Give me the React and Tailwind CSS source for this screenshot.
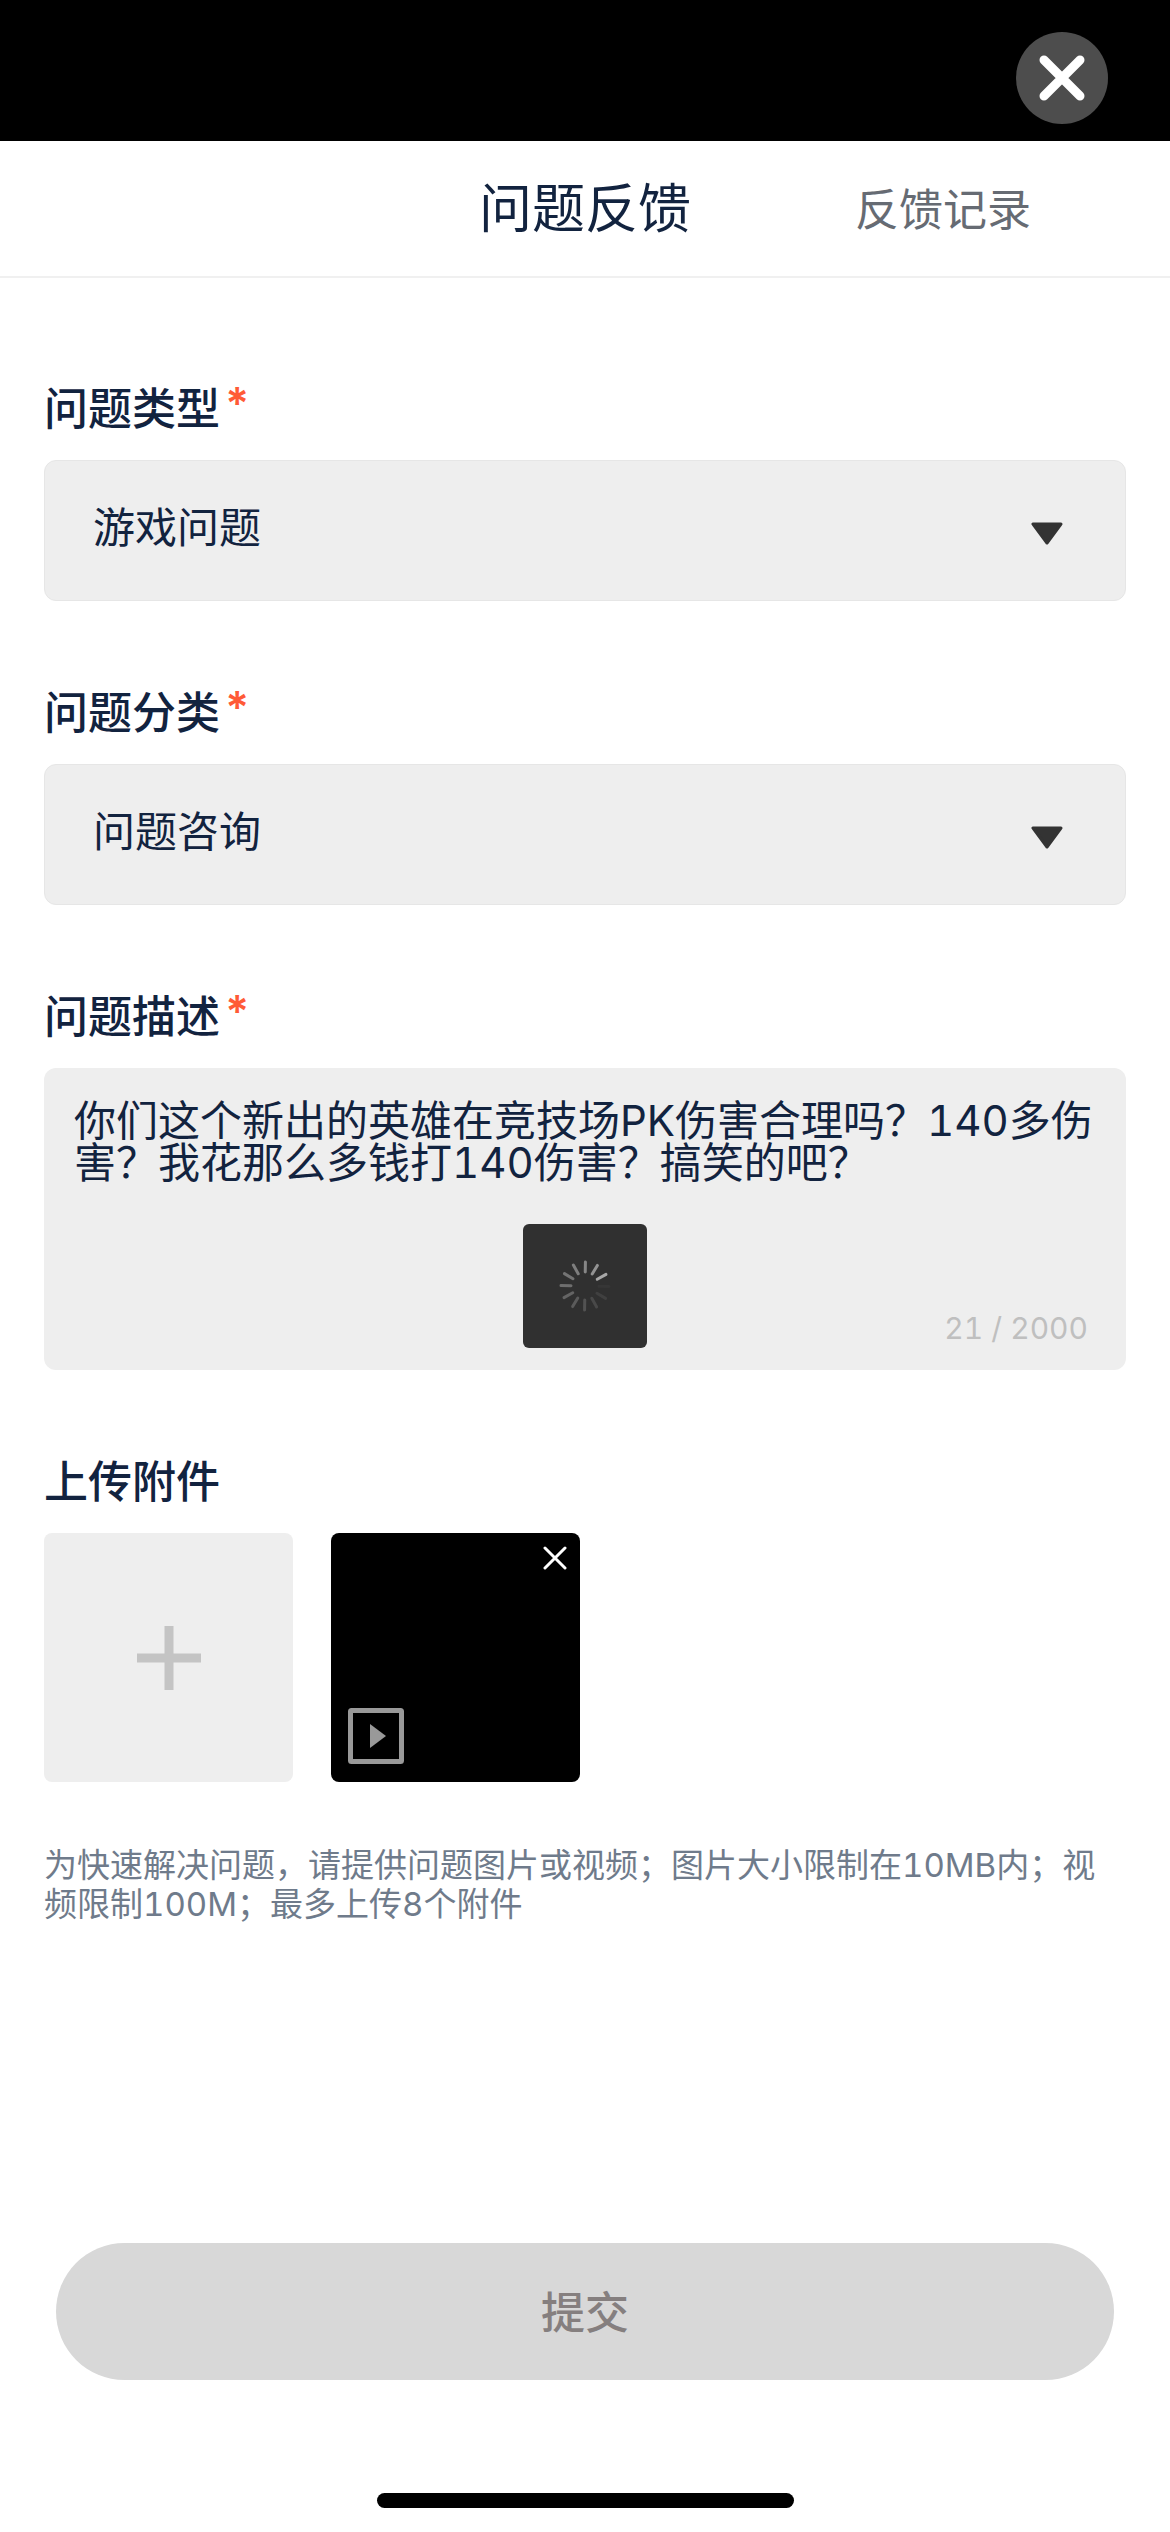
import React, { useState } from "react";

const MAX_LENGTH = 2000;

const typeOptions = ["游戏问题", "充值问题", "账号问题"];
const categoryOptions = ["问题咨询", "问题反馈", "意见建议"];

// twelve spokes, clockwise from the top
const spokes = [0.42, 0.48, 0.58, 0.03, 0.08, 0.12, 0.17, 0.21, 0.25, 0.3, 0.33, 0.38];

const Spinner = () => (
    <svg viewBox="-30 -30 60 60" className="w-[60px] h-[60px]">
        {spokes.map((opacity, i) => (
            <line
                key={i}
                x1="0"
                y1="-24"
                x2="0"
                y2="-14"
                stroke="#fff"
                strokeWidth="3"
                strokeLinecap="round"
                strokeOpacity={opacity}
                transform={`rotate(${i * 30 + 1})`}
            />
        ))}
    </svg>
);

const FieldLabel = ({ htmlFor, children }) => (
    <label
        htmlFor={htmlFor}
        className="flex items-start mb-[23px] pt-[2px] text-[44px] leading-[56px] font-medium"
    >
        {children}
        <span className="ml-[3px] leading-[44px] font-semibold text-[#ff5a36]">*</span>
    </label>
);

const SelectField = ({ id, label, options, value, onChange }) => (
    <div className="mb-[82px]">
        <FieldLabel htmlFor={id}>{label}</FieldLabel>
        <div className="relative">
            <select
                id={id}
                value={value}
                onChange={(e) => onChange(e.target.value)}
                className="block w-full h-[141px] pl-[48px] pr-[120px] pb-[6px] appearance-none rounded-xl border border-[#e6e6e6] bg-[#eeeeee] text-[42px] outline-none"
            >
                {options.map((option) => (
                    <option key={option}>{option}</option>
                ))}
            </select>
            <div className="absolute inset-y-0 right-[63px] flex items-center pt-[5px] pointer-events-none">
                <svg viewBox="0 0 32 23" className="w-[32px] h-[23px]">
                    <path
                        d="M2 2H30L16 21Z"
                        fill="#333"
                        stroke="#333"
                        strokeWidth="3"
                        strokeLinejoin="round"
                    />
                </svg>
            </div>
        </div>
    </div>
);

const App = () => {
    const [type, setType] = useState("游戏问题");
    const [category, setCategory] = useState("问题咨询");
    const [description, setDescription] = useState(
        "你们这个新出的英雄在竞技场PK伤害合理吗？140多伤害？我花那么多钱打140伤害？搞笑的吧？"
    );

    return (
        <div className="min-h-screen flex flex-col bg-white text-[#12233f] tabular-nums font-['Inter','Noto_Sans_CJK_SC',sans-serif]">
            <div className="h-[141px] flex justify-end items-center pt-[15px] pr-[62px] bg-black">
                <button
                    type="button"
                    aria-label="关闭"
                    className="w-[92px] h-[92px] flex items-center justify-center rounded-full bg-[#4d4d4d]"
                >
                    <svg viewBox="0 0 48 48" className="w-[48px] h-[48px]">
                        <path
                            d="M6 6L42 42M42 6L6 42"
                            stroke="#fff"
                            strokeWidth="9"
                            strokeLinecap="round"
                        />
                    </svg>
                </button>
            </div>

            <header className="h-[137px] grid grid-cols-[1fr_auto_1fr] items-center border-b-2 border-[#f0f0f0]">
                <h1 className="col-start-2 text-[53px] leading-[64px]">问题反馈</h1>
                <a
                    href="#records"
                    className="justify-self-end mr-[139px] pt-[2px] text-[44px] leading-[56px] text-[#666b73]"
                >
                    反馈记录
                </a>
            </header>

            <form
                className="flex-1 flex flex-col"
                onSubmit={(e) => e.preventDefault()}
            >
                <div className="flex-1 px-[44px] pt-[101px]">
                    <SelectField
                        id="type"
                        label="问题类型"
                        options={typeOptions}
                        value={type}
                        onChange={setType}
                    />
                    <SelectField
                        id="category"
                        label="问题分类"
                        options={categoryOptions}
                        value={category}
                        onChange={setCategory}
                    />

                    <div className="mb-[82px]">
                        <FieldLabel htmlFor="description">问题描述</FieldLabel>
                        <div className="relative flex flex-col px-[30px] pt-[32px] pb-[22px] rounded-xl bg-[#eeeeee]">
                            <textarea
                                id="description"
                                maxLength={MAX_LENGTH}
                                value={description}
                                onChange={(e) => setDescription(e.target.value)}
                                className="w-full h-[208px] resize-none bg-transparent text-[42px] leading-[42px] outline-none"
                            />
                            <span className="self-end mr-[8px] text-[30px] leading-[40px] text-[#bfbfbf]">
                                21 / {MAX_LENGTH}
                            </span>
                            <div className="absolute inset-x-0 bottom-[22px] flex justify-center pointer-events-none">
                                <div className="w-[124px] h-[124px] flex items-center justify-center rounded-md bg-[#303030]">
                                    <Spinner />
                                </div>
                            </div>
                        </div>
                    </div>

                    <h2 className="mb-[23px] pt-[2px] text-[44px] leading-[56px] font-medium">
                        上传附件
                    </h2>
                    <div className="flex gap-[38px]">
                        <button
                            type="button"
                            aria-label="添加附件"
                            className="w-[249px] h-[249px] flex items-center justify-center rounded-lg bg-[#eeeeee]"
                        >
                            <svg viewBox="0 0 64 64" className="w-[64px] h-[64px]">
                                <path d="M32 0V64M0 32H64" stroke="#c4c4c4" strokeWidth="9" />
                            </svg>
                        </button>
                        <div className="w-[249px] h-[249px] flex flex-col justify-between rounded-lg bg-black pt-[13px] pr-[13px] pb-[18px] pl-[17px]">
                            <button type="button" aria-label="删除附件" className="self-end">
                                <svg viewBox="0 0 24 24" className="w-[24px] h-[24px]">
                                    <path
                                        d="M2 2L22 22M22 2L2 22"
                                        stroke="#fff"
                                        strokeWidth="3"
                                        strokeLinecap="round"
                                    />
                                </svg>
                            </button>
                            <svg viewBox="0 0 56 56" className="w-[56px] h-[56px]">
                                <rect
                                    x="2.5"
                                    y="2.5"
                                    width="51"
                                    height="51"
                                    rx="1"
                                    fill="none"
                                    stroke="#999"
                                    strokeWidth="5"
                                />
                                <path d="M22 16L38 28L22 40Z" fill="#999" />
                            </svg>
                        </div>
                    </div>

                    <p className="mt-16 pr-4 text-[33px] leading-[39px] text-[#6f7b8b]">
                        为快速解决问题，请提供问题图片或视频；图片大小限制在10MB内；视频限制100M；最多上传8个附件
                    </p>
                </div>

                <div className="px-[56px] pb-[113px]">
                    <button
                        type="submit"
                        disabled
                        className="w-full h-[137px] pt-[2px] rounded-full bg-[#d8d8d8] text-[44px] leading-[56px] font-medium text-[#857f7f]"
                    >
                        提交
                    </button>
                </div>
            </form>

            <div className="flex justify-center pb-6">
                <div className="w-[417px] h-[15px] rounded-full bg-black"></div>
            </div>
        </div>
    );
};

export default App;
